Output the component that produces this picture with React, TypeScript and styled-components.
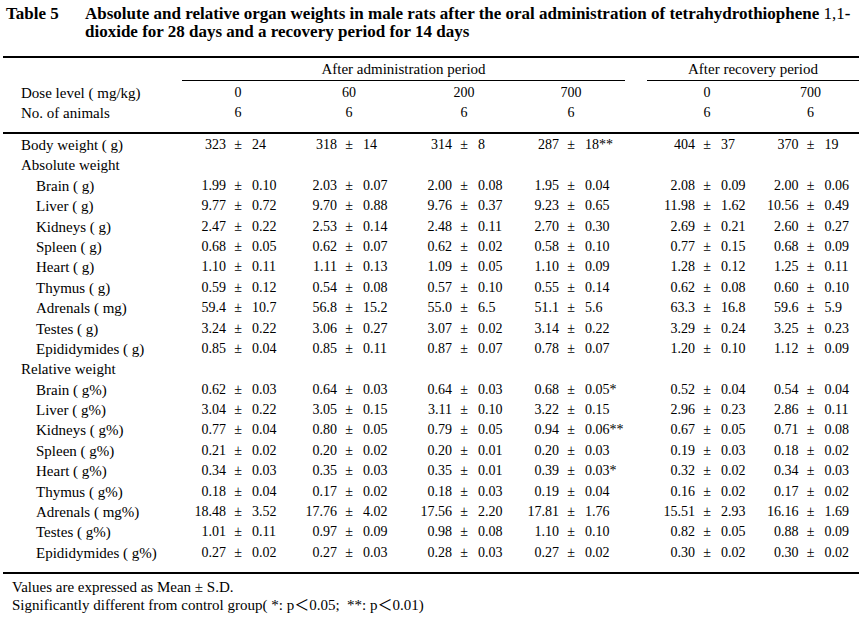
import React from "react";
import styled, { createGlobalStyle } from "styled-components";

const GlobalStyle = createGlobalStyle`
  html, body { margin: 0; padding: 0; background: #fff; }
  body { font-family: "Liberation Serif", "Noto Sans CJK JP", serif; color: #000; }
`;

const COLS = "182px 112px 110px 120px 94px 34px 110px 97px";

const Page = styled.div`
  width: 859px;
  font-family: "Liberation Serif", "Noto Sans CJK JP", serif;
  color: #000;
`;

const Caption = styled.div`
  display: flex;
  padding: 5px 0 0 6px;
  font-weight: bold;
  font-size: 17px;
  line-height: 17.5px;
`;

const CaptionLabel = styled.div`
  flex: none;
  width: 79px;
`;

const CaptionText = styled.div`
  flex: 1;
`;

const Light = styled.span`
  font-weight: normal;
`;

const Rule = styled.div<{ $gap: number }>`
  height: 2px;
  background: #000;
  margin-left: 3px;
  margin-top: ${(p) => p.$gap}px;
`;

const Section = styled.div<{ $pt: number; $pb: number }>`
  padding-top: ${(p) => p.$pt}px;
  padding-bottom: ${(p) => p.$pb}px;
`;

const Row = styled.div<{ $h: number }>`
  display: grid;
  grid-template-columns: ${COLS};
  height: ${(p) => p.$h}px;
  line-height: ${(p) => p.$h}px;
  white-space: nowrap;
`;

const GroupHead = styled.div<{ $from: number; $to: number; $ml?: number; $mr?: number }>`
  grid-column: ${(p) => p.$from} / ${(p) => p.$to};
  margin-left: ${(p) => p.$ml ?? 0}px;
  margin-right: ${(p) => p.$mr ?? 0}px;
  box-sizing: border-box;
  border-bottom: 1px solid #000;
  text-align: center;
  font-size: 15px;
  line-height: 22px;
`;

const Label = styled.div<{ $indent: number }>`
  padding-left: ${(p) => p.$indent}px;
  font-size: 15px;
`;

const HeadNum = styled.div`
  text-align: center;
  font-size: 14px;
`;

const Spacer = styled.div``;

const Value = styled.div`
  display: grid;
  grid-template-columns: minmax(0, 1fr) 24px minmax(0, 1fr);
  font-size: 14px;
`;

const Mean = styled.span`
  display: flex;
  justify-content: flex-end;
`;

const Pm = styled.span`
  text-align: center;
`;

const Sd = styled.span`
  padding-left: 2px;
`;

const Notes = styled.div`
  padding: 4px 0 0 12px;
  font-size: 15px;
  line-height: 18px;
`;

type Cell = [string, string];
type DataRow = { label: string; indent: number; values?: Cell[] };

const p = (s: string): Cell[] =>
  s.split(",").map((v) => {
    const [m, d] = v.trim().split("±");
    return [m.trim(), d.trim()] as Cell;
  });

const doses = ["0", "60", "200", "700", "0", "700"];
const animals = ["6", "6", "6", "6", "6", "6"];

const rows: DataRow[] = [
  { label: "Body weight ( g)", indent: 21, values: p("323±24, 318±14, 314±8, 287±18**, 404±37, 370±19") },
  { label: "Absolute weight", indent: 21 },
  { label: "Brain ( g)", indent: 36, values: p("1.99±0.10, 2.03±0.07, 2.00±0.08, 1.95±0.04, 2.08±0.09, 2.00±0.06") },
  { label: "Liver ( g)", indent: 36, values: p("9.77±0.72, 9.70±0.88, 9.76±0.37, 9.23±0.65, 11.98±1.62, 10.56±0.49") },
  { label: "Kidneys ( g)", indent: 36, values: p("2.47±0.22, 2.53±0.14, 2.48±0.11, 2.70±0.30, 2.69±0.21, 2.60±0.27") },
  { label: "Spleen ( g)", indent: 36, values: p("0.68±0.05, 0.62±0.07, 0.62±0.02, 0.58±0.10, 0.77±0.15, 0.68±0.09") },
  { label: "Heart ( g)", indent: 36, values: p("1.10±0.11, 1.11±0.13, 1.09±0.05, 1.10±0.09, 1.28±0.12, 1.25±0.11") },
  { label: "Thymus ( g)", indent: 36, values: p("0.59±0.12, 0.54±0.08, 0.57±0.10, 0.55±0.14, 0.62±0.08, 0.60±0.10") },
  { label: "Adrenals ( mg)", indent: 36, values: p("59.4±10.7, 56.8±15.2, 55.0±6.5, 51.1±5.6, 63.3±16.8, 59.6±5.9") },
  { label: "Testes ( g)", indent: 36, values: p("3.24±0.22, 3.06±0.27, 3.07±0.02, 3.14±0.22, 3.29±0.24, 3.25±0.23") },
  { label: "Epididymides ( g)", indent: 36, values: p("0.85±0.04, 0.85±0.11, 0.87±0.07, 0.78±0.07, 1.20±0.10, 1.12±0.09") },
  { label: "Relative weight", indent: 21 },
  { label: "Brain ( g%)", indent: 36, values: p("0.62±0.03, 0.64±0.03, 0.64±0.03, 0.68±0.05*, 0.52±0.04, 0.54±0.04") },
  { label: "Liver ( g%)", indent: 36, values: p("3.04±0.22, 3.05±0.15, 3.11±0.10, 3.22±0.15, 2.96±0.23, 2.86±0.11") },
  { label: "Kidneys ( g%)", indent: 36, values: p("0.77±0.04, 0.80±0.05, 0.79±0.05, 0.94±0.06**, 0.67±0.05, 0.71±0.08") },
  { label: "Spleen ( g%)", indent: 36, values: p("0.21±0.02, 0.20±0.02, 0.20±0.01, 0.20±0.03, 0.19±0.03, 0.18±0.02") },
  { label: "Heart ( g%)", indent: 36, values: p("0.34±0.03, 0.35±0.03, 0.35±0.01, 0.39±0.03*, 0.32±0.02, 0.34±0.03") },
  { label: "Thymus ( g%)", indent: 36, values: p("0.18±0.04, 0.17±0.02, 0.18±0.03, 0.19±0.04, 0.16±0.02, 0.17±0.02") },
  { label: "Adrenals ( mg%)", indent: 36, values: p("18.48±3.52, 17.76±4.02, 17.56±2.20, 17.81±1.76, 15.51±2.93, 16.16±1.69") },
  { label: "Testes ( g%)", indent: 36, values: p("1.01±0.11, 0.97±0.09, 0.98±0.08, 1.10±0.10, 0.82±0.05, 0.88±0.09") },
  { label: "Epididymides ( g%)", indent: 36, values: p("0.27±0.02, 0.27±0.03, 0.28±0.03, 0.27±0.02, 0.30±0.02, 0.30±0.02") },
];

function HeadRow({ label, items }: { label: string; items: string[] }) {
  return (
    <Row $h={20}>
      <Label $indent={21}>{label}</Label>
      {items.slice(0, 4).map((t, i) => (
        <HeadNum key={i}>{t}</HeadNum>
      ))}
      <Spacer />
      {items.slice(4).map((t, i) => (
        <HeadNum key={i + 4}>{t}</HeadNum>
      ))}
    </Row>
  );
}

function ValueCell({ cell }: { cell: Cell }) {
  return (
    <Value>
      <Mean>{cell[0]}</Mean>
      <Pm>±</Pm>
      <Sd>{cell[1]}</Sd>
    </Value>
  );
}

function BodyRow({ row }: { row: DataRow }) {
  const v = row.values;
  return (
    <Row $h={20.4}>
      <Label $indent={row.indent}>{row.label}</Label>
      {v && (
        <>
          {v.slice(0, 4).map((c, i) => (
            <ValueCell key={i} cell={c} />
          ))}
          <Spacer />
          {v.slice(4).map((c, i) => (
            <ValueCell key={i + 4} cell={c} />
          ))}
        </>
      )}
    </Row>
  );
}

export default function App() {
  return (
    <Page>
      <GlobalStyle />
      <Caption>
        <CaptionLabel>Table 5</CaptionLabel>
        <CaptionText>
          Absolute and relative organ weights in male rats after the oral administration of tetrahydrothiophene{" "}
          <Light>1,1</Light>-
          <br />
          dioxide for 28 days and a recovery period for 14 days
        </CaptionText>
      </Caption>
      <Rule $gap={16} />
      <Row $h={23}>
        <Spacer />
        <GroupHead $from={2} $to={6} $mr={-7}>
          After administration period
        </GroupHead>
        <GroupHead $from={7} $to={9} $ml={-5}>
          After recovery period
        </GroupHead>
      </Row>
      <Section $pt={2} $pb={9}>
        <HeadRow label="Dose level ( mg/kg)" items={doses} />
        <HeadRow label="No. of animals" items={animals} />
      </Section>
      <Rule $gap={0} />
      <Section $pt={1} $pb={8.6}>
        {rows.map((r, i) => (
          <BodyRow key={i} row={r} />
        ))}
      </Section>
      <Rule $gap={0} />
      <Notes>
        <div>Values are expressed as Mean ± S.D.</div>
        <div>Significantly different from control group( *: p＜0.05;&nbsp; **: p＜0.01)</div>
      </Notes>
    </Page>
  );
}
